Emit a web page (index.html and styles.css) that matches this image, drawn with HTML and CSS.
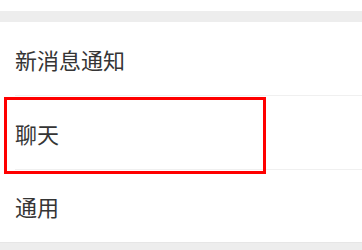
FILE: index.html
```html
<!DOCTYPE html>
<html>
<head>
<meta charset="utf-8">
<link rel="stylesheet" href="styles.css">
</head>
<body>
<div class="top"></div>
<div class="gap"></div>
<div class="list">
  <div class="item"><div class="inner"><span class="label">新消息通知</span></div></div>
  <div class="item focused"><div class="inner"><span class="label">聊天</span></div><div class="focus-ring"></div></div>
  <div class="item last"><div class="inner"><span class="label">通用</span></div></div>
</div>
<div class="bottom"></div>
</body>
</html>
```

FILE: styles.css
```css
html, body {
  margin: 0;
  padding: 0;
  background: #ffffff;
  font-family: "Noto Sans CJK SC", "Noto Sans", sans-serif;
  overflow: hidden;
}
.top {
  height: 11px;
  background: #ffffff;
}
.gap {
  height: 11px;
  background: #ededed;
}
.list {
  background: #ffffff;
}
.item {
  position: relative;
  padding-left: 15px;
}
.inner {
  height: 73px;
  display: flex;
  align-items: center;
  border-bottom: 1px solid #f0f0f0;
}
.item.last .inner {
  height: 72px;
  border-bottom: none;
}
.label {
  font-size: 22px;
  color: #353535;
  line-height: 1;
}
.focus-ring {
  position: absolute;
  left: 4px;
  top: 1px;
  width: 256px;
  height: 71px;
  border: 3px solid #ff0000;
  z-index: 2;
}
.bottom {
  height: 7px;
  background: #ededed;
  border-top: 1px solid #e6e6e6;
}
```
